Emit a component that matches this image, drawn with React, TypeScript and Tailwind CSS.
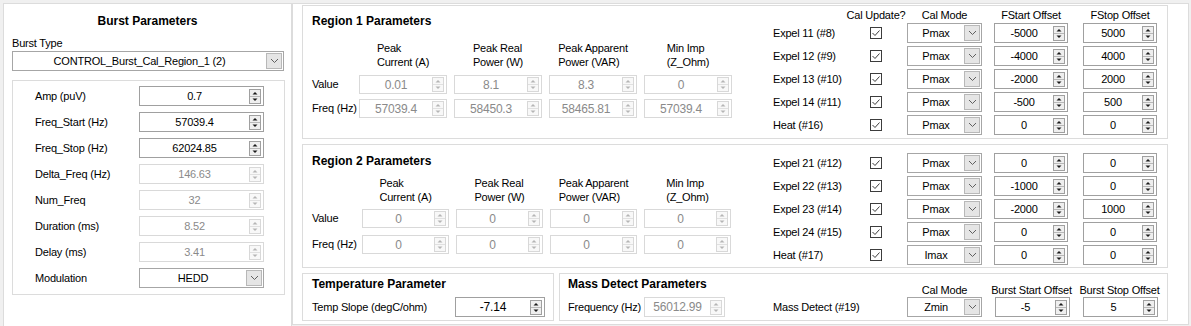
import React from 'react';

function Spin({ disabled }: { disabled?: boolean }) {
  const c = disabled ? '#b5b5b5' : '#1a1a1a';
  return (
    <svg width="12" height="15" viewBox="0 0 12 15" className="shrink-0 mr-[2px]">
      <rect x="0.5" y="0.5" width="11" height="14" fill={disabled ? '#f8f8f8' : '#efefef'} stroke={disabled ? '#d8d8d8' : '#a0a0a0'} />
      <line x1="1" y1="7.5" x2="11" y2="7.5" stroke={disabled ? '#e0e0e0' : '#b8b8b8'} />
      <path d="M3.5 5.5 L6 3 L8.5 5.5 Z" fill={c} />
      <path d="M3.5 9.5 L6 12 L8.5 9.5 Z" fill={c} />
    </svg>
  );
}

function NumBox({ value, disabled, className }: { value: string; disabled?: boolean; className: string }) {
  return (
    <div
      className={`flex items-center bg-white border ${disabled ? 'border-[#d9d9d9] text-[#8a8a8a]' : 'border-[#a0a0a0] text-black'} ${className}`}
    >
      <span className="flex-1 text-center leading-none">{value}</span>
      <Spin disabled={disabled} />
    </div>
  );
}

function Chevron() {
  return (
    <svg width="9" height="6" viewBox="0 0 9 6">
      <path d="M1 1 L4.5 4.5 L8 1" stroke="#606060" strokeWidth="1" fill="none" />
    </svg>
  );
}

function Combo({ value, className }: { value: string; className: string }) {
  return (
    <div className={`flex items-stretch bg-white border border-[#a6a6a6] ${className}`}>
      <span className="flex-1 flex items-center justify-center leading-none">{value}</span>
      <div className="w-[16px] my-[1px] mr-[1px] bg-[#e5e5e5] border border-[#b8b8b8] flex items-center justify-center">
        <Chevron />
      </div>
    </div>
  );
}

function Check() {
  return (
    <svg width="12" height="12" viewBox="0 0 12 12">
      <rect x="0.5" y="0.5" width="11" height="11" fill="#ffffff" stroke="#3c3c3c" />
      <path d="M2.5 6 L5 8.5 L9.5 3.5" stroke="#3c3c3c" strokeWidth="1" fill="none" />
    </svg>
  );
}

const leftRows: { label: string; value: string; disabled?: boolean; combo?: boolean }[] = [
  { label: 'Amp (puV)', value: '0.7' },
  { label: 'Freq_Start (Hz)', value: '57039.4' },
  { label: 'Freq_Stop (Hz)', value: '62024.85' },
  { label: 'Delta_Freq (Hz)', value: '146.63', disabled: true },
  { label: 'Num_Freq', value: '32', disabled: true },
  { label: 'Duration (ms)', value: '8.52', disabled: true },
  { label: 'Delay (ms)', value: '3.41', disabled: true },
  { label: 'Modulation', value: 'HEDD', combo: true },
];

type TRow = { label: string; mode: string; start: string; stop: string };

const r1Table: TRow[] = [
  { label: 'Expel 11 (#8)', mode: 'Pmax', start: '-5000', stop: '5000' },
  { label: 'Expel 12 (#9)', mode: 'Pmax', start: '-4000', stop: '4000' },
  { label: 'Expel 13 (#10)', mode: 'Pmax', start: '-2000', stop: '2000' },
  { label: 'Expel 14 (#11)', mode: 'Pmax', start: '-500', stop: '500' },
  { label: 'Heat (#16)', mode: 'Pmax', start: '0', stop: '0' },
];

const r2Table: TRow[] = [
  { label: 'Expel 21 (#12)', mode: 'Pmax', start: '0', stop: '0' },
  { label: 'Expel 22 (#13)', mode: 'Pmax', start: '-1000', stop: '0' },
  { label: 'Expel 23 (#14)', mode: 'Pmax', start: '-2000', stop: '1000' },
  { label: 'Expel 24 (#15)', mode: 'Pmax', start: '0', stop: '0' },
  { label: 'Heat (#17)', mode: 'Imax', start: '0', stop: '0' },
];

const headers = [
  ['Peak', 'Current (A)'],
  ['Peak Real', 'Power (W)'],
  ['Peak Apparent', 'Power (VAR)'],
  ['Min Imp', '(Z_Ohm)'],
];

function TableRows({ rows }: { rows: TRow[] }) {
  return (
    <div className="flex flex-col gap-[3px]">
      {rows.map((r) => (
        <div key={r.label} className="flex items-center h-[20px]">
          <div className="w-[84px] whitespace-nowrap">{r.label}</div>
          <div className="w-[38px] flex justify-center">
            <Check />
          </div>
          <Combo value={r.mode} className="ml-[12px] w-[75px] h-[20px]" />
          <NumBox value={r.start} className="ml-[12px] w-[74px] h-[20px]" />
          <NumBox value={r.stop} className="ml-[15px] w-[74px] h-[20px]" />
        </div>
      ))}
    </div>
  );
}

export default function App() {
  return (
    <div className="w-[1191px] h-[326px] overflow-hidden bg-[#f0f0f0] flex pt-[3px] pl-[3px] font-['Liberation_Sans',Arial,sans-serif] text-[11px] tracking-[-0.2px] text-black">
      {/* Left panel */}
      <div className="w-[289px] h-[330px] bg-white border border-[#dcdcdc] px-[8px] flex flex-col">
        <div className="mt-[9px] h-[16px] leading-[16px] text-center font-bold text-[12px] tracking-normal">Burst Parameters</div>
        <div className="mt-[7px] h-[14px] leading-[14px]">Burst Type</div>
        <Combo value="CONTROL_Burst_Cal_Region_1 (2)" className="mt-[1px] w-[272px] h-[20px]" />
        <div className="mt-[9px] w-[273px] border border-[#dcdcdc] pt-[5px] pb-[6px] pl-[22px] flex flex-col gap-[6px]">
          {leftRows.map((r) => (
            <div key={r.label} className="flex items-center h-[20px]">
              <div className="w-[104px] whitespace-nowrap">{r.label}</div>
              {r.combo ? (
                <Combo value={r.value} className="w-[125px] h-[20px]" />
              ) : (
                <NumBox value={r.value} disabled={r.disabled} className="w-[125px] h-[20px]" />
              )}
            </div>
          ))}
        </div>
      </div>

      {/* Right panel */}
      <div className="w-[897px] h-[322px] bg-white border border-[#dcdcdc] pl-[9px] pt-[1px] flex flex-col">
        {/* Region 1 */}
        <div className="w-[866px] h-[134px] border border-[#dcdcdc] flex">
          <div className="w-[470px] pl-[9px] flex flex-col">
            <div className="mt-[8px] h-[14px] leading-[14px] font-bold text-[12px] tracking-normal">Region 1 Parameters</div>
            <div className="mt-[13px] flex">
              <div className="w-[47px]" />
              <div className="flex gap-[7px]">
                {headers.map((h) => (
                  <div key={h[0]} className="w-[88px] flex justify-center">
                    <div className="leading-[14px] whitespace-nowrap">
                      <div>{h[0]}</div>
                      <div>{h[1]}</div>
                    </div>
                  </div>
                ))}
              </div>
            </div>
            <div className="mt-[6px] flex flex-col gap-[5px]">
              {[
                ['Value', ['0.01', '8.1', '8.3', '0']],
                ['Freq (Hz)', ['57039.4', '58450.3', '58465.81', '57039.4']],
              ].map(([label, vals]) => (
                <div key={label as string} className="flex items-center h-[19px]">
                  <div className="w-[47px] whitespace-nowrap">{label as string}</div>
                  <div className="flex gap-[7px]">
                    {(vals as string[]).map((v, i) => (
                      <NumBox key={i} value={v} disabled className="w-[88px] h-[19px] text-[12px]" />
                    ))}
                  </div>
                </div>
              ))}
            </div>
          </div>
          <div className="flex flex-col">
            <div className="mt-[2px] h-[14px] leading-[14px] flex">
              <div className="w-[84px]" />
              <div className="w-[38px] flex justify-center whitespace-nowrap">Cal Update?</div>
              <div className="ml-[12px] w-[75px] flex justify-center whitespace-nowrap">Cal Mode</div>
              <div className="ml-[12px] w-[74px] flex justify-center whitespace-nowrap">FStart Offset</div>
              <div className="ml-[15px] w-[74px] flex justify-center whitespace-nowrap">FStop Offset</div>
            </div>
            <div className="mt-[1px]">
              <TableRows rows={r1Table} />
            </div>
          </div>
        </div>

        {/* Region 2 */}
        <div className="mt-[5px] w-[866px] h-[124px] border border-[#dcdcdc] flex">
          <div className="w-[470px] pl-[9px] flex flex-col">
            <div className="mt-[9px] h-[14px] leading-[14px] font-bold text-[12px] tracking-normal">Region 2 Parameters</div>
            <div className="mt-[8px] flex">
              <div className="w-[50px]" />
              <div className="flex gap-[7px]">
                {headers.map((h) => (
                  <div key={h[0]} className="w-[87px] flex justify-center">
                    <div className="leading-[14px] whitespace-nowrap">
                      <div>{h[0]}</div>
                      <div>{h[1]}</div>
                    </div>
                  </div>
                ))}
              </div>
            </div>
            <div className="mt-[5px] flex flex-col gap-[7px]">
              {['Value', 'Freq (Hz)'].map((label) => (
                <div key={label} className="flex items-center h-[19px]">
                  <div className="w-[50px] whitespace-nowrap">{label}</div>
                  <div className="flex gap-[7px]">
                    {[0, 1, 2, 3].map((i) => (
                      <NumBox key={i} value="0" disabled className="w-[87px] h-[19px] text-[12px]" />
                    ))}
                  </div>
                </div>
              ))}
            </div>
          </div>
          <div className="flex flex-col mt-[8px]">
            <TableRows rows={r2Table} />
          </div>
        </div>

        {/* Bottom row */}
        <div className="mt-[5px] flex gap-[5px]">
          <div className="w-[252px] h-[48px] border border-[#dcdcdc] pl-[9px] flex flex-col">
            <div className="mt-[3px] h-[14px] leading-[14px] font-bold text-[12px] tracking-normal">Temperature Parameter</div>
            <div className="mt-[6px] flex items-center h-[20px]">
              <div className="w-[143px] whitespace-nowrap">Temp Slope (degC/ohm)</div>
              <NumBox value="-7.14" className="w-[90px] h-[20px] text-[12px]" />
            </div>
          </div>
          <div className="w-[609px] h-[48px] border border-[#dcdcdc] pl-[8px] flex">
            <div className="w-[205px] flex flex-col">
              <div className="mt-[3px] h-[14px] leading-[14px] font-bold text-[12px] tracking-normal">Mass Detect Parameters</div>
              <div className="mt-[6px] flex items-center h-[20px]">
                <div className="w-[76px] whitespace-nowrap">Frequency (Hz)</div>
                <NumBox value="56012.99" disabled className="w-[81px] h-[20px] text-[12px]" />
              </div>
            </div>
            <div className="flex flex-col">
              <div className="mt-[9px] h-[14px] leading-[14px] flex">
                <div className="w-[84px]" />
                <div className="w-[38px]" />
                <div className="ml-[12px] w-[75px] flex justify-center whitespace-nowrap">Cal Mode</div>
                <div className="ml-[12px] w-[75px] flex justify-center whitespace-nowrap">Burst Start Offset</div>
                <div className="ml-[13px] w-[75px] flex justify-center whitespace-nowrap">Burst Stop Offset</div>
              </div>
              <div className="flex items-center h-[20px]">
                <div className="w-[122px] whitespace-nowrap">Mass Detect (#19)</div>
                <Combo value="Zmin" className="ml-[12px] w-[75px] h-[20px]" />
                <NumBox value="-5" className="ml-[13px] w-[75px] h-[20px]" />
                <NumBox value="5" className="ml-[13px] w-[75px] h-[20px]" />
              </div>
            </div>
          </div>
        </div>
      </div>
    </div>
  );
}
